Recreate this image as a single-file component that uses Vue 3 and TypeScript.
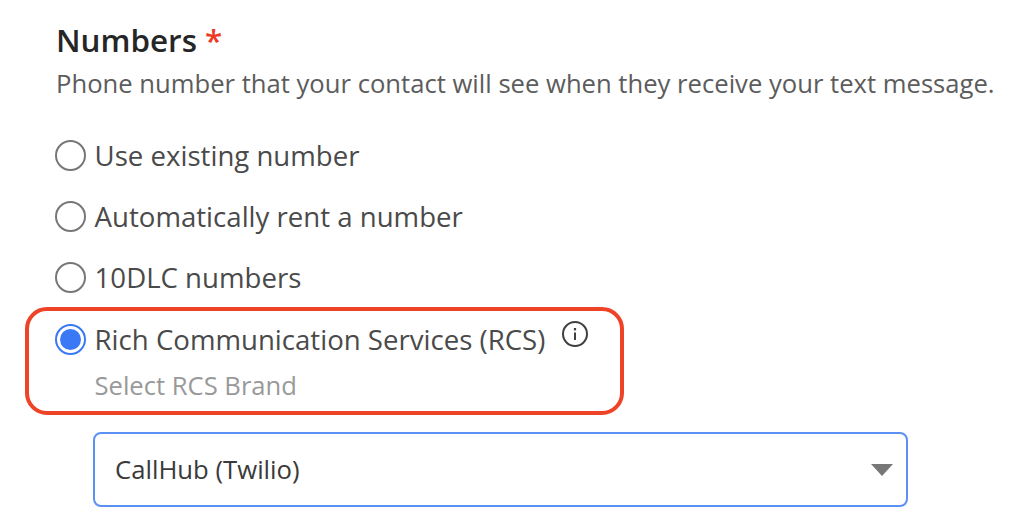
<script setup lang="ts">
const options: string[] = ['Use existing number', 'Automatically rent a number', '10DLC numbers']
</script>

<template>
  <main class="page">
    <h1 class="title">Numbers <span class="star">*</span></h1>
    <p class="desc">Phone number that your contact will see when they receive your text message.</p>
    <div class="options">
      <label v-for="o in options" :key="o" class="opt">
        <span class="radio"></span>
        <span class="label">{{ o }}</span>
      </label>
    </div>
    <section class="ring">
      <div class="opt">
        <span class="radio on"><span class="dot"></span></span>
        <span class="label">Rich Communication Services (RCS)</span>
        <svg class="info" width="28" height="28" viewBox="0 0 28 28" fill="none" stroke="#3f3f3f">
          <circle cx="14" cy="14" r="12" stroke-width="2" />
          <path d="M14 12.5v7.5" stroke-width="2" />
          <path d="M14 8v2.4" stroke-width="2.2" />
        </svg>
      </div>
      <div class="sub">Select RCS Brand</div>
    </section>
    <div class="select">
      <span>CallHub (Twilio)</span>
      <span class="caret"></span>
    </div>
  </main>
</template>

<style scoped>
.page {
  width: 1024px;
  height: 525px;
  box-sizing: border-box;
  padding: 18px 0 0 56px;
  overflow: hidden;
  background: #fff;
  font-family: "Open Sans", "Liberation Sans", sans-serif;
  color: #4a4a4a;
}
.title {
  margin: 0;
  font-size: 31.4px;
  line-height: 44px;
  font-weight: 600;
  color: #262626;
}
.star { color: #ee3a24; }
.desc {
  margin: 2px 0 0;
  font-size: 25.63px;
  line-height: 40px;
  color: #5c5c5c;
  white-space: nowrap;
}
.options {
  margin: 31px 0 0 -1px;
  display: flex;
  flex-direction: column;
  gap: 21px;
}
.opt {
  display: flex;
  align-items: center;
  height: 40px;
  gap: 8.6px;
}
.label {
  font-size: 27.6px;
  line-height: 40px;
  color: #4a4a4a;
  white-space: nowrap;
}
.radio {
  width: 31px;
  height: 31px;
  box-sizing: border-box;
  border: 2px solid #777;
  border-radius: 50%;
  flex: none;
  display: flex;
  align-items: center;
  justify-content: center;
}
.radio.on { border-color: #3b78f6; }
.dot {
  width: 21px;
  height: 21px;
  border-radius: 50%;
  background: #3b78f6;
}
.ring {
  width: 599px;
  height: 108px;
  box-sizing: border-box;
  margin: 10px 0 0 -31px;
  padding: 8px 0 0 26px;
  border: 4px solid #ee4327;
  border-radius: 22px;
}
.info { margin: -10px 0 0 7px; flex: none; }
.sub {
  margin: 10px 0 0 39.5px;
  font-size: 25.6px;
  line-height: 34px;
  color: #999;
}
.select {
  width: 815px;
  height: 75px;
  box-sizing: border-box;
  margin: 17px 0 0 37px;
  padding: 0 13px 0 20px;
  border: 2px solid #5b90f5;
  border-radius: 8px;
  display: flex;
  align-items: center;
  justify-content: space-between;
  font-size: 25.7px;
  color: #3a3a3a;
}
.caret {
  width: 0;
  height: 0;
  border-left: 11px solid transparent;
  border-right: 11px solid transparent;
  border-top: 12px solid #777;
}
</style>
